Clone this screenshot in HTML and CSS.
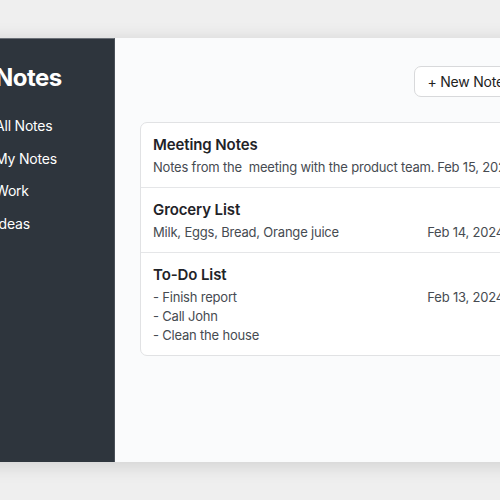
FILE: index.html
```html
<!DOCTYPE html>
<html lang="en">
<head>
<meta charset="utf-8">
<title>Notes</title>
<link rel="stylesheet" href="styles.css">
</head>
<body>
<div class="page">
  <div class="window">
    <aside class="sidebar">
      <h1 class="brand">Notes</h1>
      <nav class="nav">
        <a class="nav-item">All Notes</a>
        <a class="nav-item">My Notes</a>
        <a class="nav-item">Work</a>
        <a class="nav-item">Ideas</a>
      </nav>
    </aside>
    <main class="main">
      <div class="toolbar">
        <button class="btn">+ New Note</button>
      </div>
      <div class="list">
        <div class="note">
          <div class="note-body">
            <div class="note-title">Meeting Notes</div>
            <div class="note-text">Notes from the&nbsp; meeting with the product team.</div>
          </div>
          <div class="note-date">Feb 15, 2024</div>
        </div>
        <div class="note">
          <div class="note-body">
            <div class="note-title">Grocery List</div>
            <div class="note-text">Milk, Eggs, Bread, Orange juice</div>
          </div>
          <div class="note-date">Feb 14, 2024</div>
        </div>
        <div class="note">
          <div class="note-body">
            <div class="note-title">To-Do List</div>
            <div class="note-text">- Finish report<br>- Call John<br>- Clean the house</div>
          </div>
          <div class="note-date">Feb 13, 2024</div>
        </div>
      </div>
    </main>
  </div>
</div>
</body>
</html>
```

FILE: styles.css
```css
html, body {
  margin: 0;
  height: 500px;
  overflow: hidden;
}
body {
  background: #efefef;
  font-family: Inter, "Noto Sans", sans-serif;
  color: #1f2328;
}
.page {
  padding-top: 38px;
}
.window {
  display: flex;
  width: 570px;
  height: 424px;
  margin-left: -25px;
  box-shadow: 0 3px 18px rgba(0, 0, 0, 0.14);
}
.sidebar {
  width: 140px;
  flex: none;
  box-sizing: border-box;
  background: #2e353d;
  padding: 24px 20px;
  color: #fff;
  border-top: 1px solid #6b7077;
  border-right: 1px solid #4a5058;
}
.brand {
  margin: 0 0 18px;
  font-size: 24px;
  line-height: 29px;
  font-weight: 700;
  letter-spacing: -0.5px;
}
.nav {
  display: flex;
  flex-direction: column;
}
.nav-item {
  font-size: 14px;
  line-height: 16.5px;
  padding: 8px 0;
  color: #fff;
  letter-spacing: -0.2px;
}
.main {
  flex: 1;
  min-width: 0;
  background: #fafbfc;
  padding: 28px 28px 28px 25px;
}
.toolbar {
  display: flex;
  justify-content: flex-end;
}
.btn {
  height: 31px;
  padding: 0 12px;
  border: 1px solid #d8d9db;
  border-radius: 7px;
  background: #fff;
  font-family: inherit;
  font-size: 14px;
  letter-spacing: -0.2px;
  color: #222;
}
.list {
  margin-top: 25px;
  background: #fff;
  border: 1px solid #e1e2e4;
  border-radius: 7px;
}
.note {
  display: flex;
  align-items: flex-start;
  gap: 3px;
  padding: 11px 12px 10px;
  border-bottom: 1px solid #e5e6e8;
}
.note:last-child {
  border-bottom: none;
}
.note-body {
  flex: none;
}
.note-title {
  font-size: 15px;
  line-height: 22px;
  font-weight: 600;
  letter-spacing: -0.1px;
  color: #1f2328;
  margin-bottom: 2px;
}
.note-text, .note-date {
  font-size: 13px;
  line-height: 19px;
  letter-spacing: -0.2px;
  color: #464b51;
  white-space: nowrap;
}
.note-date {
  margin-left: auto;
  margin-top: 24px;
  flex: none;
}
```
